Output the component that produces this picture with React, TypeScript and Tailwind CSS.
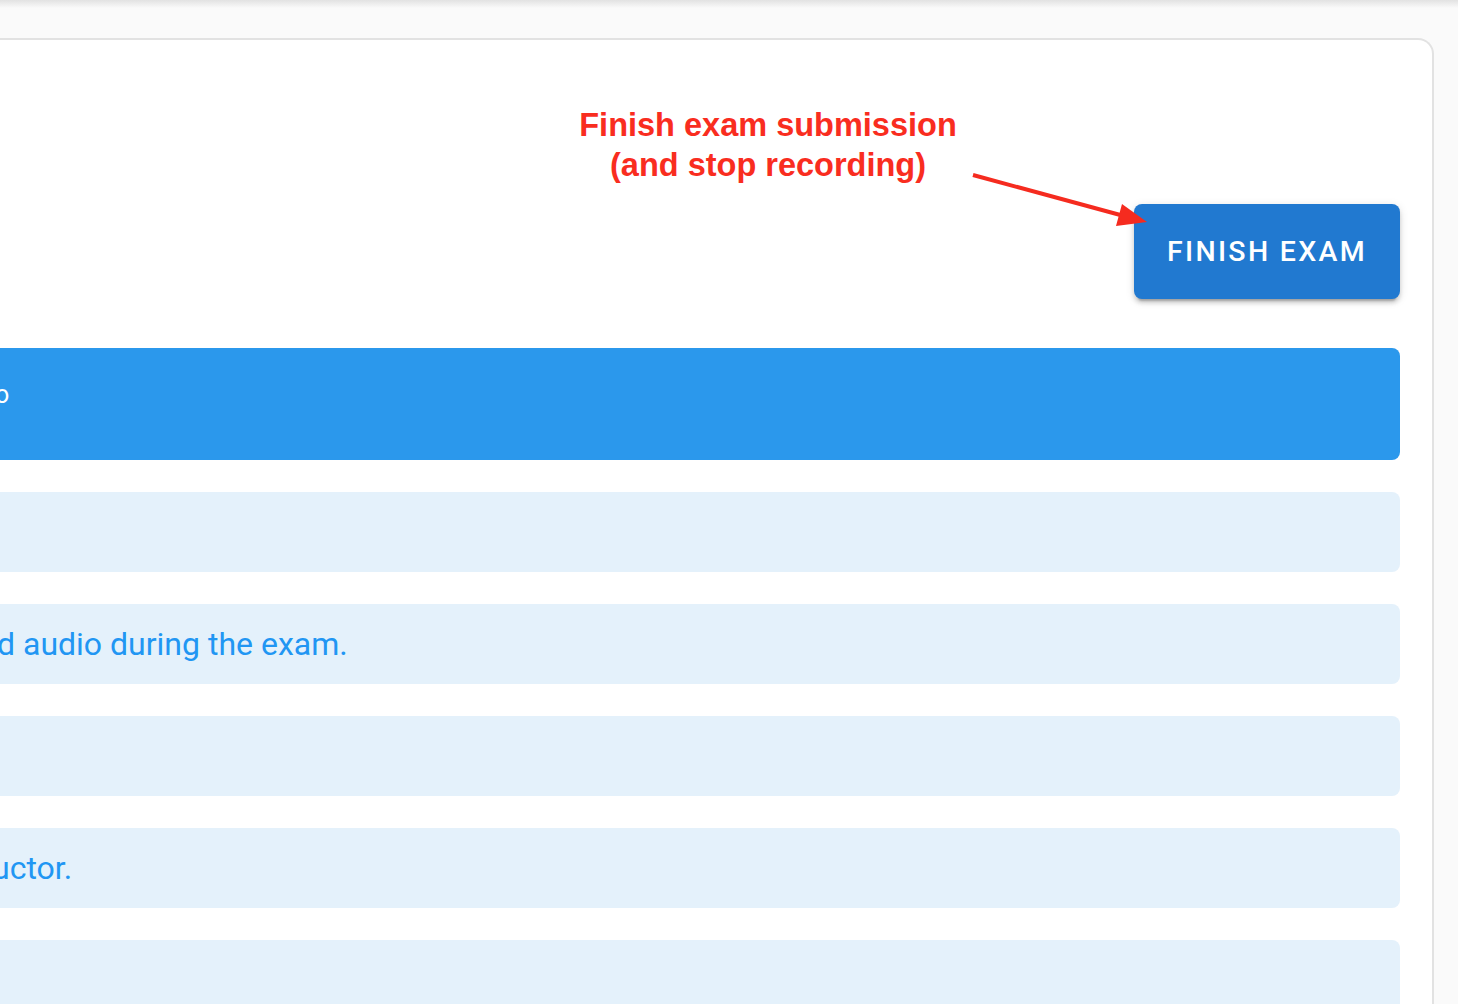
import React from "react";

const rows: { hidden: string; visible: string; w: string }[] = [
  { hidden: "Please make sure your webcam and microphone are enabled.", visible: "", w: "w-[757px]" },
  { hidden: "This exam will record your screen, webcam an", visible: "d audio during the exam.", w: "w-[755px]" },
  { hidden: "Do not leave the exam window open in another tab.", visible: "", w: "w-[757px]" },
  { hidden: "If you have any questions, contact your instr", visible: "uctor.", w: "w-[750px]" },
  { hidden: "Good luck with your exam!", visible: "", w: "w-[757px]" },
];

export default function App() {
  return (
    <div
      className="relative min-h-[1004px] w-full overflow-hidden bg-[#fafafa]"
      style={{ fontFamily: "Roboto, 'Noto Sans', sans-serif" }}
    >
      <div className="h-[8px] bg-gradient-to-b from-[#e2e2e2] to-[#fafafa]" />
      <div className="ml-[-760px] mr-[24px] mt-[30px] rounded-t-[16px] border-2 border-b-0 border-[#e2e2e2] bg-white pr-[32px] pt-[164px] pb-[40px]">
        <div className="flex justify-end">
          <button className="flex h-[95px] w-[266px] items-center justify-center rounded-[8px] bg-[#2179d0] pt-[2px] text-[28.5px] font-medium tracking-[2.3px] text-white shadow-[0_6px_2px_-4px_rgba(0,0,0,0.2),0_4px_4px_0_rgba(0,0,0,0.14),0_2px_10px_0_rgba(0,0,0,0.12)]">
            FINISH EXAM
          </button>
        </div>
        <div className="mt-[49px] flex h-[112px] items-start rounded-[8px] bg-[#2b98ec] pt-[33px] text-[25px] leading-[28px] text-white">
          <div className="flex w-[753px] shrink-0 justify-end whitespace-nowrap">Exam Instructions and Setu</div>
          <div className="whitespace-nowrap">o</div>
        </div>
        {rows.map((r, i) => (
          <div
            key={i}
            className="mt-[32px] flex h-[80px] items-center rounded-[8px] bg-[#e4f1fb] text-[32px] text-[#2196f3]"
          >
            <div className={`flex ${r.w} shrink-0 justify-end whitespace-nowrap`}>{r.hidden}</div>
            <div className="whitespace-nowrap">{r.visible}</div>
          </div>
        ))}
      </div>

      <div
        className="absolute left-[568px] top-[105px] w-[400px] text-center text-[32.5px] font-bold leading-[40px] text-[#f92d1f]"
        style={{ fontFamily: "'Liberation Sans', Arial, sans-serif" }}
      >
        Finish exam submission
        <br />
        (and stop recording)
      </div>

      <svg className="absolute left-0 top-0" width="1458" height="400" viewBox="0 0 1458 400">
        <line x1="973" y1="175" x2="1124" y2="216" stroke="#f52b1f" strokeWidth="4" />
        <polygon points="1147,222 1122,204 1116,226" fill="#f52b1f" />
      </svg>
    </div>
  );
}
